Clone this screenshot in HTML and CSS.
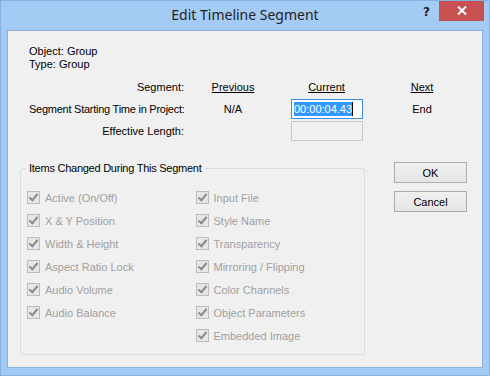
FILE: index.html
```html
<!DOCTYPE html>
<html lang="en">
  <head>
    <meta charset="UTF-8" />
    <title>Edit Timeline Segment</title>
    <link rel="stylesheet" href="styles.css">
  </head>
  <body>
    <section class="window">
      <div class="titlebar">
        <span></span>
        <h1 class="title">Edit Timeline Segment</h1>
        <div class="controls">
          <span class="help">?</span>
          <span class="close">
            <svg width="10" height="9" viewBox="0 0 10 9">
              <path d="M1 0.5 L9 8.5 M9 0.5 L1 8.5" stroke="#fff" stroke-width="2" />
            </svg>
          </span>
        </div>
      </div>

      <div class="client">
        <div class="info">
          <p>Object: Group</p>
          <p>Type: Group</p>
        </div>

        <div class="segment">
          <span class="label">Segment:</span>
          <span class="head">Previous</span>
          <span class="head">Current</span>
          <span class="head">Next</span>

          <span class="label tight">Segment Starting Time in Project:</span>
          <span class="cell">N/A</span>
          <div class="field active"><span class="sel">00:00:04.43</span><span class="caret"></span></div>
          <span class="cell">End</span>

          <span class="label">Effective Length:</span>
          <span></span>
          <div class="field disabled"></div>
          <span></span>
        </div>

        <div class="lower">
          <fieldset class="group">
            <legend>Items Changed During This Segment</legend>
            <div class="cols">
              <div class="col">
                <label class="check"><i class="box"></i>Active (On/Off)</label>
                <label class="check"><i class="box"></i>X &amp; Y Position</label>
                <label class="check"><i class="box"></i>Width &amp; Height</label>
                <label class="check"><i class="box"></i>Aspect Ratio Lock</label>
                <label class="check"><i class="box"></i>Audio Volume</label>
                <label class="check"><i class="box"></i>Audio Balance</label>
              </div>
              <div class="col">
                <label class="check"><i class="box"></i>Input File</label>
                <label class="check"><i class="box"></i>Style Name</label>
                <label class="check"><i class="box"></i>Transparency</label>
                <label class="check"><i class="box"></i>Mirroring / Flipping</label>
                <label class="check"><i class="box"></i>Color Channels</label>
                <label class="check"><i class="box"></i>Object Parameters</label>
                <label class="check"><i class="box"></i>Embedded Image</label>
              </div>
            </div>
          </fieldset>

          <div class="buttons">
            <button class="btn">OK</button>
            <button class="btn">Cancel</button>
          </div>
        </div>
      </div>
    </section>
  </body>
</html>
```

FILE: styles.css
```css
html, body {
  margin: 0;
  height: 100%;
}
body {
  font-family: "Liberation Sans", Arial, sans-serif;
  font-size: 11px;
  color: #000;
}
p {
  margin: 0;
}
.window {
  box-sizing: border-box;
  width: 490px;
  height: 376px;
  background: #a4cbf4;
  border: 1px solid #86b0e0;
  display: flex;
  flex-direction: column;
}
.titlebar {
  height: 29px;
  display: grid;
  grid-template-columns: 1fr auto 1fr;
  align-items: start;
}
.titlebar .title {
  margin: 0;
  font-family: "Noto Sans", sans-serif;
  font-weight: normal;
  font-size: 14px;
  line-height: 28px;
  color: #222;
}
.titlebar .controls {
  display: flex;
  justify-content: flex-end;
  align-items: center;
  margin-right: 5px;
  height: 20px;
}
.titlebar .help {
  font-family: "DejaVu Sans", sans-serif;
  font-weight: bold;
  font-size: 12px;
  color: #222;
  margin-right: 9px;
  margin-top: 2px;
}
.titlebar .close {
  width: 45px;
  height: 20px;
  margin-top: -1px;
  background: #c75050;
  display: flex;
  align-items: center;
  justify-content: center;
}
.client {
  flex: 1;
  margin: 0 6px 7px 6px;
  background: #f0f0f0;
  border: 1px solid #8cb3de;
  padding-left: 12px;
}
.info {
  margin: 14px 0 0 9px;
  line-height: 13px;
}
.segment {
  margin: 6px 0 0 9px;
  display: grid;
  grid-template-columns: 155px 98px 89px 102px;
  grid-template-rows: 20px 20px 20px;
  row-gap: 2px;
  align-items: center;
}
.segment .label {
  text-align: right;
  white-space: nowrap;
}
.segment .label.tight {
  letter-spacing: -0.25px;
}
.segment .head {
  text-align: center;
  text-decoration: underline;
}
.segment .cell {
  text-align: center;
}
.field {
  box-sizing: border-box;
  width: 72px;
  height: 20px;
  margin-left: 9px;
  border: 1px solid #c8c8c8;
  display: flex;
  align-items: center;
  padding-left: 2px;
}
.field.active {
  border-color: #3d8ee0;
  background: #fff;
}
.field .sel {
  background: #3399ff;
  color: #fff;
  line-height: 14px;
  font-size: 11px;
}
.field .caret {
  width: 1px;
  height: 14px;
  background: #000;
}
.lower {
  display: flex;
  align-items: flex-start;
  margin-top: 21px;
}
.group {
  box-sizing: border-box;
  width: 345px;
  height: 193px;
  margin: 0;
  padding: 11px 0 0 6px;
  border: 1px solid #dcdcdc;
  border-radius: 3px;
  min-width: 0;
}
.group legend {
  margin-left: -1px;
  padding: 0 3px;
  line-height: 13px;
  letter-spacing: -0.25px;
}
.cols {
  display: flex;
}
.col {
  width: 172px;
  display: flex;
  flex-direction: column;
}
.check {
  height: 23px;
  display: flex;
  align-items: center;
  color: #a0a0a0;
}
.box {
  box-sizing: border-box;
  width: 13px;
  height: 13px;
  margin-right: 5px;
  border: 1px solid #bcbcbc;
  background: #e6e6e6;
  position: relative;
}
.box::after {
  content: "";
  position: absolute;
  left: 3px;
  top: 0px;
  width: 3px;
  height: 7px;
  border: solid #8a8a8a;
  border-width: 0 2px 2px 0;
  transform: rotate(40deg);
}
.buttons {
  display: flex;
  flex-direction: column;
  gap: 8px;
  margin-left: 29px;
}
.btn {
  width: 73px;
  height: 21px;
  font-family: "Liberation Sans", Arial, sans-serif;
  font-size: 11px;
  color: #000;
  background: linear-gradient(#f0f0f0, #e5e5e5);
  border: 1px solid #acacac;
  padding: 0;
}
```
